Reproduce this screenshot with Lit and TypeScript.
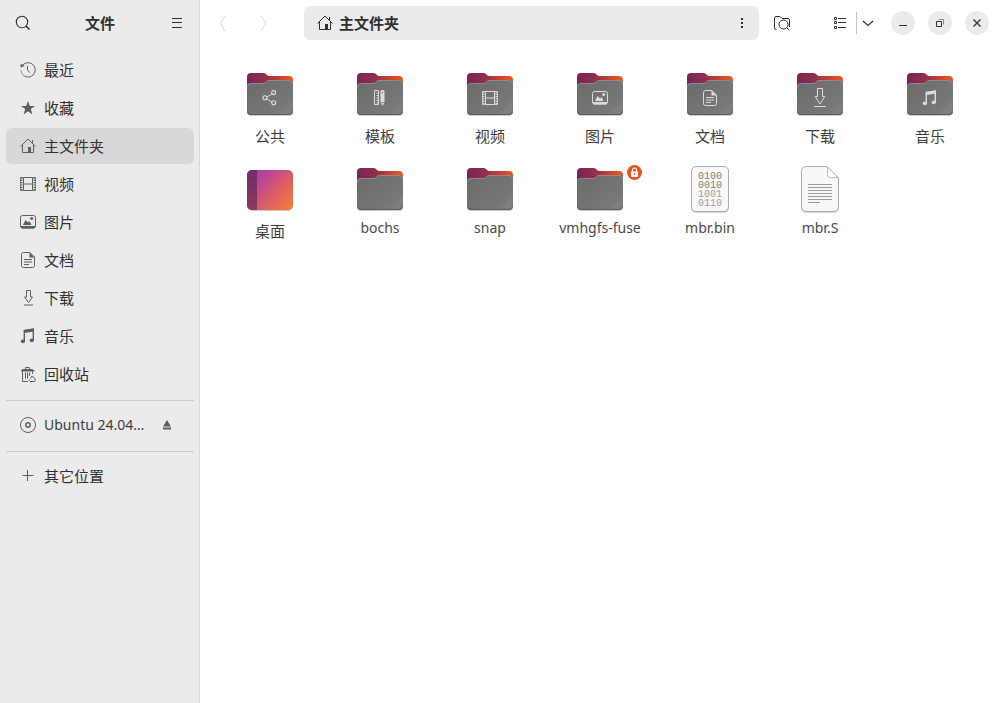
import { LitElement, html, css, svg, nothing } from "lit";
import { customElement, property, state } from "lit/decorators.js";

const glyphs: Record<string, unknown> = {
  recent: svg`<path d="M2.6 3.2A7.2 7.2 0 1 1 .9 8.6" fill="none" stroke="currentColor"/><path d="M7.500 4v4.200l2.600 2.500" fill="none" stroke="currentColor"/><path d="M.4 5.600.9 1.600 4.600 4.200z"/><path d="M1 9.600c.2 1.500 1 2.900 2 3.900" fill="none" stroke="#ebebeb" stroke-width="1.600" stroke-dasharray="1 1.500"/>`,
  star: svg`<path d="M8 1 9.800 6H15l-4.200 3.100L12.400 14.500 8 11.300 3.600 14.500 5.200 9.100 1 6h5.200z"/>`,
  home: svg`<path d="M.5 8.500 8 1l7.500 7.500M2.500 7v7.500h11V7M12.500 2v3.500" fill="none" stroke="currentColor"/><path d="M8 9h3v5.500H8z"/>`,
  video: svg`<path d="M3.500 1.500h9v13h-9zM3.500 8h9" fill="none" stroke="currentColor"/><path d="M1.500 1.500v13M14.500 1.500v13" fill="none" stroke="currentColor" stroke-width="2" stroke-dasharray="1.200 1.100"/><path d="M.5 1.500v13M15.500 1.500v13M.5 1.500h3M.5 14.500h3M12.500 1.500h3M12.500 14.500h3" fill="none" stroke="currentColor" stroke-width=".8"/>`,
  image: svg`<rect x=".5" y="1.500" width="15" height="12.500" rx="2" fill="none" stroke="currentColor"/><path d="M1 12h14v1.500l-1 1H2l-1-1zM3 11l2.500-5L8 8.500 9.500 7l2 4z"/><circle cx="11.700" cy="4.600" r="1.500"/>`,
  doc: svg`<path d="M3.500.5H10L14.500 5v8.500a2 2 0 0 1-2 2h-9a2 2 0 0 1-2-2v-11a2 2 0 0 1 2-2z" fill="none" stroke="currentColor"/><path d="M9.500.5 14.500 5.500h-5zM4 7h8v1H4zM4 9.500h8v1H4zM4 12h5v1H4z"/>`,
  download: svg`<path d="M6.500.5h4V7h2L8.500 12.500 4.500 7h2zM4 15h9" fill="none" stroke="currentColor"/>`,
  downloadLarge: svg`<path d="M6.500-.5h5v8h2.300L9 15 4.200 7.500h2.300zM3 17.500h12" fill="none" stroke="currentColor"/>`,
  music: svg`<path d="M4.300 13V2.500l9-1.500V12" fill="none" stroke="currentColor" stroke-width="1.400"/><path d="M3.600 2 14 .5v3L4.300 5z"/><ellipse cx="2.900" cy="13.300" rx="2.100" ry="1.900"/><ellipse cx="11.800" cy="12.300" rx="2.100" ry="1.900"/>`,
  trash: svg`<path d="M1 5.500v-1L3 3h9l2.500 1.500v1z"/><path d="M5.500 3V1.500h4V3M2.500 5.500v10H8M12.500 5.500V8M5.500 6.500v6M7.500 6.500v6M9.500 6.500V10" fill="none" stroke="currentColor"/><path d="M12 10 10.500 12.500M9.500 13.500 9 14.500l1 1h4.500l1-1.500-1.500-2.500-2-1" fill="none" stroke="currentColor"/>`,
  disc: svg`<circle cx="8" cy="8" r="7.500" fill="none" stroke="currentColor"/><circle cx="8" cy="8" r="2.200" fill="none" stroke="currentColor" stroke-width="1.500"/>`,
  plus: svg`<path d="M2.500 7.500h11M7.500 2v11" fill="none" stroke="currentColor"/>`,
  eject: svg`<path d="M8 3l4 6.500H4zM4 10.500h8v2H4z"/>`,
  search: svg`<circle cx="7" cy="7" r="5.700" fill="none" stroke="currentColor" stroke-width="1.100"/><path d="m11 11 3.500 3.500" fill="none" stroke="currentColor" stroke-width="1.500"/>`,
  menu: svg`<path d="M3 3.500h10M3 7.500h10M3 12.500h10" fill="none" stroke="currentColor"/>`,
  back: svg`<path d="M10 1 5.500 8.500 10 16" fill="none" stroke="currentColor"/>`,
  forward: svg`<path d="M5 1 10 8.500 5 16" fill="none" stroke="currentColor"/>`,
  dots: svg`<path d="M7 3h2v2H7zM7 7h2v2H7zM7 11h2v2H7z"/>`,
  folderSearch: svg`<path d="M2.500 14.500h-.5a1.500 1.500 0 0 1-1.500-1.500V3a1.500 1.500 0 0 1 1.500-1.500h4L8 3.500h6A1.500 1.500 0 0 1 15.500 5v7" fill="none" stroke="currentColor"/><circle cx="9.500" cy="9.500" r="4.500" fill="none" stroke="currentColor"/><path d="m12.700 12.700 2.500 2.500" stroke="currentColor"/>`,
  list: svg`<path d="M2.500 2.500h2v2h-2zM2.500 6.500h2v2h-2zM2.500 11.500h2v2h-2z" fill="none" stroke="currentColor"/><path d="M6 3.500H14M6 7.500H14M6 12.500H14" stroke="currentColor"/>`,
  chevron: svg`<path d="m3 6 5 4.500L13 6" fill="none" stroke="currentColor" stroke-width="1.200"/>`,
  minimize: svg`<path d="M4 10.500h8" stroke="currentColor"/>`,
  restore: svg`<path d="M4.500 6.500h5v5h-5z" fill="none" stroke="currentColor"/><path d="M6.500 4.500h5v5" fill="none" stroke="currentColor" opacity=".5"/>`,
  close: svg`<path d="m4.500 4.500 7 7M11.500 4.500l-7 7" stroke="currentColor" stroke-width="1.300"/>`,
  share: svg`<path d="m4.500 7.300 5.500-3.300M4.500 8.700l5.500 3.300" stroke="currentColor"/><g fill="none" stroke="currentColor" stroke-width="1.100"><circle cx="2.900" cy="7.700" r="2"/><circle cx="11.700" cy="2.600" r="2"/><circle cx="11.700" cy="12.700" r="2"/></g>`,
  template: svg`<path d="M2.500.5h4v14h-4zM4.500 3h2M4.500 5.500h2M4.500 8h2M4.500 10.500h2M4.500 13h2" fill="none" stroke="currentColor"/><path d="M8.500 1.500 9.500 0h2l1 1.500V12l-2 4-2-4z"/><path d="M10.500 2v1.500M9.500 12.500h2" stroke="#6e6e6e"/>`,
};

const icon = (name: string) => html`<svg class="icon" viewBox="0 0 16 16" aria-hidden="true" fill="currentColor">${glyphs[name]}</svg>`;

const folderArt = (emblem?: string) => html`
  <svg class="art" viewBox="0 0 48 48" aria-hidden="true">
    <defs>
      <linearGradient id="back" gradientUnits="userSpaceOnUse" x1="2" y1="14" x2="46" y2="4">
        <stop offset="0" stop-color="#77245a" /><stop offset=".42" stop-color="#93304a" /><stop offset=".6" stop-color="#b83a36" /><stop offset="1" stop-color="#f0581f" />
      </linearGradient>
      <linearGradient id="front" x1="0" y1="0" x2="1" y2="1">
        <stop offset="0" stop-color="#6a6a6a" /><stop offset="1" stop-color="#7c7c7c" />
      </linearGradient>
    </defs>
    <path d="M1 10v32a4 4 0 0 0 4 4h38a4 4 0 0 0 4-4V12z" fill="#000" opacity=".2" />
    <path d="M1 7a4 4 0 0 1 4-4h13c2 0 3 3 5 3h20a4 4 0 0 1 4 4v20H1z" fill="url(#back)" />
    <path d="M1 17a4 4 0 0 1 4-4h13c2 0 3-3 5-3h20a4 4 0 0 1 4 4v27a4 4 0 0 1-4 4H5a4 4 0 0 1-4-4z" fill="url(#front)" />
    <path d="M1.500 17A3.500 3.500 0 0 1 5 13.500h13c2 0 3-3 5-3h20a3.500 3.500 0 0 1 3.500 3.500" fill="none" stroke="#8c8c8c" />
    <path d="M1.500 41A3.500 3.500 0 0 0 5 44.500h38a3.500 3.500 0 0 0 3.500-3.500" fill="none" stroke="#5c5c5c" />
    <path d="M46.500 31 33 44h10a3.500 3.500 0 0 0 3.500-3.500z" fill="#fff" opacity=".04" />
    ${emblem ? svg`<svg x="16" y="20" width="16" height="16" viewBox="0 0 16 16" overflow="visible" color="#dcdcdc" fill="currentColor">${
      emblem === "downloadLarge" ? svg`<g transform="translate(-1 -1)">${glyphs[emblem]}</g>` : glyphs[emblem]
    }</svg>` : nothing}
  </svg>`;

const desktopArt = () => html`
  <svg class="art" viewBox="0 0 48 48" aria-hidden="true">
    <defs>
      <linearGradient id="desk" x1="0" y1=".1" x2="1" y2=".9">
        <stop offset="0" stop-color="#a83a9c" /><stop offset=".25" stop-color="#b84496" /><stop offset=".6" stop-color="#dc5c68" /><stop offset="1" stop-color="#f57c38" />
      </linearGradient>
      <linearGradient id="dock" x1="0" y1="0" x2="0" y2="1">
        <stop offset="0" stop-color="#702a70" /><stop offset="1" stop-color="#8e3b55" />
      </linearGradient>
    </defs>
    <rect x="1" y="6" width="46" height="40" rx="5" opacity=".2" />
    <rect x="1" y="5" width="46" height="40" rx="5" fill="url(#desk)" />
    <path d="M11 5v40H6a5 5 0 0 1-5-5V10a5 5 0 0 1 5-5z" fill="url(#dock)" />
  </svg>`;

const binaryArt = () => html`
  <svg class="art" viewBox="0 0 48 48" aria-hidden="true">
    <rect x="5" y="2" width="38" height="46" rx="5" opacity=".15" />
    <rect x="5.500" y="1.500" width="37" height="45" rx="4.500" fill="#f8f8f8" stroke="#acacac" />
    <g class="bits" text-anchor="middle">
      <text x="24" y="14" fill="#808080">0100</text>
      <text x="24" y="23" fill="#808080">0010</text>
      <text x="24" y="32" fill="#a0a0a0">1001</text>
      <text x="24" y="41" fill="#a0a0a0">0110</text>
    </g>
  </svg>`;

const textArt = () => html`
  <svg class="art" viewBox="0 0 48 48" aria-hidden="true">
    <path d="M10 2h21l12 12v29a5 5 0 0 1-5 5H10a5 5 0 0 1-5-5V7a5 5 0 0 1 5-5z" opacity=".15" />
    <path d="M10 1.500h21L42.500 13v29a4.500 4.500 0 0 1-4.500 4.500H10A4.500 4.500 0 0 1 5.500 42V6A4.500 4.500 0 0 1 10 1.500z" fill="#f8f8f8" stroke="#acacac" />
    <path d="M31.500 2v7.500a3 3 0 0 0 3 3h7.500z" fill="#fff" stroke="#b8b8b8" />
    <path d="M12 19.500h24M12 22.500h24M12 25.500h24M12 28.500h24M12 31.500h24M12 34.500h24M12 37.500h12" stroke="#999" />
  </svg>`;

type Entry = { name: string; kind: "folder" | "desktop" | "binary" | "text"; emblem?: string; locked?: boolean; latin?: boolean };

const entries: Entry[] = [
  { name: "公共", kind: "folder", emblem: "share" },
  { name: "模板", kind: "folder", emblem: "template" },
  { name: "视频", kind: "folder", emblem: "video" },
  { name: "图片", kind: "folder", emblem: "image" },
  { name: "文档", kind: "folder", emblem: "doc" },
  { name: "下载", kind: "folder", emblem: "downloadLarge" },
  { name: "音乐", kind: "folder", emblem: "music" },
  { name: "桌面", kind: "desktop" },
  { name: "bochs", kind: "folder", latin: true },
  { name: "snap", kind: "folder", latin: true },
  { name: "vmhgfs-fuse", kind: "folder", locked: true, latin: true },
  { name: "mbr.bin", kind: "binary", latin: true },
  { name: "mbr.S", kind: "text", latin: true },
];

const places = [
  ["recent", "最近"], ["star", "收藏"], ["home", "主文件夹"], ["video", "视频"], ["image", "图片"],
  ["doc", "文档"], ["download", "下载"], ["music", "音乐"], ["trash", "回收站"],
];

const base = css`
  * { box-sizing: border-box; }
  button, a { font: inherit; color: inherit; background: none; border: 0; padding: 0; margin: 0; text-decoration: none; }
  .icon { display: block; width: 16px; height: 16px; flex: none; }
`;

@customElement("places-sidebar")
class PlacesSidebar extends LitElement {
  static styles = [base, css`
    :host { display: flex; flex-direction: column; background: #ebebeb; border-right: 1px solid #d9d9d9; }
    .head { display: grid; grid-template-columns: 34px 1fr 34px; align-items: center; height: 46px; padding: 0 5px 0 6px; }
    .head button { display: grid; place-items: center; height: 34px; }
    h1 { margin: 0; font-size: 15px; line-height: 22px; font-weight: 700; text-align: center; }
    nav { padding: 6px 5px 6px 6px; }
    ul { list-style: none; margin: 0; padding: 0; display: grid; gap: 2px; }
    .row { display: flex; align-items: center; height: 36px; border-radius: 6px; padding: 0 14px; gap: 8px; }
    .row .icon { color: #5e5e5e; }
    .current { background: #d8d8d8; }
    .name { flex: 1; min-width: 0; overflow: hidden; text-overflow: ellipsis; white-space: nowrap; line-height: 22px; }
    .latin { font-size: 14px; color: #3d3d3d; }
    hr { border: 0; height: 1px; background: #cdcdcd; margin: 8px 0 6px; }
    .drive { display: flex; align-items: center; padding-right: 19px; gap: 12px; }
    .drive .row { flex: 1; min-width: 0; padding-right: 0; }
    .eject { color: #5e5e5e; }
  `];
  @property() current = "主文件夹";
  render() {
    return html`
      <header class="head">
        <button aria-label="搜索">${icon("search")}</button>
        <h1>文件</h1>
        <button aria-label="主菜单">${icon("menu")}</button>
      </header>
      <nav>
        <ul>
          ${places.map(([glyph, name]) => html`<li><a class="row ${name === this.current ? "current" : ""}" href="#">${icon(glyph)}<span class="name">${name}</span></a></li>`)}
        </ul>
        <hr />
        <div class="drive">
          <a class="row" href="#">${icon("disc")}<span class="name latin">Ubuntu 24.04…</span></a>
          <button class="eject" aria-label="弹出">${icon("eject")}</button>
        </div>
        <hr />
        <a class="row" href="#">${icon("plus")}<span class="name">其它位置</span></a>
      </nav>`;
  }
}

@customElement("files-toolbar")
class FilesToolbar extends LitElement {
  static styles = [base, css`
    :host { display: flex; align-items: center; height: 46px; padding: 0 11px 0 6px; }
    button { display: grid; place-items: center; height: 34px; width: 34px; flex: none; }
    .history { display: flex; gap: 7px; }
    .history button { color: #d6d6d6; }
    .path { flex: 1; display: flex; align-items: center; height: 34px; margin: 0 6px 0 23px; padding-left: 13px; border-radius: 6px; background: #ebebeb; }
    .crumb { flex: 1; display: flex; align-items: center; gap: 6px; font-weight: 700; line-height: 22px; }
    .views { display: flex; align-items: center; margin-left: 25px; }
    .views button { width: 32px; }
    .views .more { width: 22px; }
    .rule { width: 1px; height: 22px; background: #c4c4c4; }
    .window { display: flex; gap: 13px; margin-left: 12px; }
    .window button { width: 24px; height: 24px; border-radius: 50%; background: #ebebeb; }
  `];
  render() {
    return html`
      <div class="history">
        <button aria-label="后退" disabled>${icon("back")}</button>
        <button aria-label="前进" disabled>${icon("forward")}</button>
      </div>
      <div class="path">
        <a class="crumb" href="#">${icon("home")}<span>主文件夹</span></a>
        <button aria-label="当前文件夹菜单">${icon("dots")}</button>
      </div>
      <button aria-label="搜索当前文件夹">${icon("folderSearch")}</button>
      <div class="views">
        <button aria-label="列表视图">${icon("list")}</button>
        <span class="rule"></span>
        <button class="more" aria-label="视图选项">${icon("chevron")}</button>
      </div>
      <div class="window">
        <button aria-label="最小化">${icon("minimize")}</button>
        <button aria-label="还原">${icon("restore")}</button>
        <button aria-label="关闭">${icon("close")}</button>
      </div>`;
  }
}

@customElement("file-grid")
class FileGrid extends LitElement {
  static styles = [base, css`
    :host { display: block; padding: 24px 15px; }
    ul { list-style: none; margin: 0; padding: 0; display: grid; grid-template-columns: repeat(auto-fill, minmax(110px, 1fr)); row-gap: 18px; }
    .item { width: 100%; display: flex; flex-direction: column; align-items: center; gap: 7px; color: #3d3d3d; }
    .thumb { position: relative; display: block; }
    .art { display: block; width: 48px; height: 48px; }
    .name { line-height: 22px; }
    .latin { font-size: 14px; line-height: 16px; color: #4a4a4a; }
    .lock { position: absolute; right: -18px; top: 0; width: 15px; height: 15px; }
    .bits { font: 10px "Liberation Mono", monospace; }
  `];
  art(entry: Entry) {
    if (entry.kind === "desktop") return desktopArt();
    if (entry.kind === "binary") return binaryArt();
    if (entry.kind === "text") return textArt();
    return folderArt(entry.emblem);
  }
  render() {
    return html`<ul>${entries.map((entry) => html`
      <li><button class="item">
        <span class="thumb">
          ${this.art(entry)}
          ${entry.locked ? html`<svg class="lock" viewBox="0 0 15 15" aria-hidden="true"><circle cx="7.500" cy="7.500" r="7.500" fill="#e95420"/><path d="M5.500 7V5a2 2 0 0 1 4 0v2" fill="none" stroke="#fff" stroke-width="1.200"/><path d="M4 6.500h7V11a1 1 0 0 1-1 1H5a1 1 0 0 1-1-1z" fill="#fff"/><path d="M7.500 8v2" stroke="#e95420"/></svg>` : nothing}
        </span>
        <span class="name ${entry.latin ? "latin" : ""}">${entry.name}</span>
      </button></li>`)}</ul>`;
  }
}

@customElement("app-root")
class AppRoot extends LitElement {
  static styles = css`
    :host { display: grid; grid-template-columns: 200px minmax(0, 1fr); min-height: 100vh; background: #fff; color: #303030; font: 15px "Noto Sans", "Noto Sans CJK SC", sans-serif; }
  `;
  @state() folder = "主文件夹";
  render() {
    return html`
      <places-sidebar .current=${this.folder}></places-sidebar>
      <main>
        <files-toolbar></files-toolbar>
        <file-grid></file-grid>
      </main>`;
  }
}
